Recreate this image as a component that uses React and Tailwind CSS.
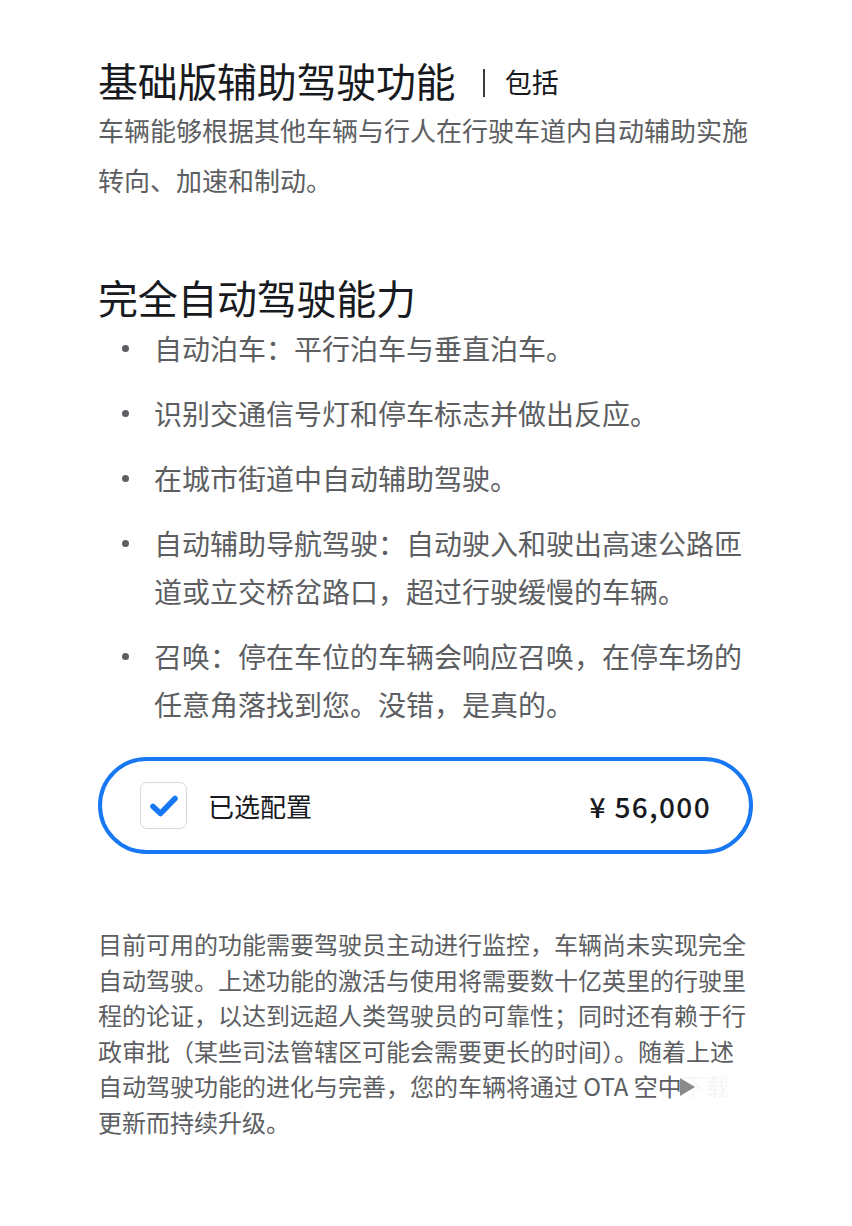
import React from 'react';

const features = [
  ['自动泊车：平行泊车与垂直泊车。'],
  ['识别交通信号灯和停车标志并做出反应。'],
  ['在城市街道中自动辅助驾驶。'],
  ['自动辅助导航驾驶：自动驶入和驶出高速公路匝道或立交桥岔路口，超过行驶缓慢的车辆。'],
  ['召唤：停在车位的车辆会响应召唤，在停车场的任意角落找到您。没错，是真的。'],
];

const font = { fontFamily: '"Noto Sans CJK SC", "Noto Sans", sans-serif' };

export default function App() {
  return (
    <div className="min-h-[1226px] bg-white text-[#171a20]" style={font}>
      <div className="w-[656px] ml-[98px] pt-[56px]">
        {/* 基础版 */}
        <div className="flex items-center h-[48px]">
          <h2 className="text-[40px] leading-[48px] font-normal tracking-[-0.3px]">基础版辅助驾驶功能</h2>
          <span className="w-[1.5px] h-[28px] bg-[#393c41] ml-[28px] mt-[6px]" />
          <span className="text-[27px] ml-[20px] mt-[4px]">包括</span>
        </div>
        <p className="text-[26px] leading-[50px] text-[#5c5e62] mt-px">
          车辆能够根据其他车辆与行人在行驶车道内自动辅助实施转向、加速和制动。
        </p>

        {/* 完全自动驾驶能力 */}
        <h2 className="text-[40px] leading-[48px] font-normal tracking-[-0.3px] mt-[68px]">完全自动驾驶能力</h2>
        <ul className="mt-[3px] flex flex-col gap-[17px]">
          {features.map(([text]) => (
            <li key={text} className="flex text-[28px] leading-[48px] text-[#5c5e62]">
              <span className="w-[56px] shrink-0 flex justify-start pl-[24px] pt-[21px]">
                <span className="w-[7px] h-[7px] rounded-full bg-[#5c5e62]" />
              </span>
              <span className="w-[594px]">{text}</span>
            </li>
          ))}
        </ul>

        {/* 已选配置 */}
        <div className="mt-[29px] w-[655px] h-[97px] rounded-full border-[4px] border-[#1877f2] flex items-center pl-[38px] pr-[38px]">
          <div className="w-[47px] h-[47px] rounded-[7px] border-[1.5px] border-[#d9d9d9] flex items-center justify-center">
            <svg width="30" height="24" viewBox="0 0 30 24" fill="none">
              <path d="M4 12.5 L11.5 19.5 L26 4.5" stroke="#1877f2" strokeWidth="5.5" strokeLinecap="round" strokeLinejoin="round" />
            </svg>
          </div>
          <span className="ml-[21px] text-[26px] text-[#171a20]">已选配置</span>
          <span className="ml-auto text-[28px] font-medium tracking-[1.4px] text-[#171a20]">¥ 56,000</span>
        </div>

        {/* 说明 */}
        <div className="mt-[72px] text-[24px] leading-[35.5px] text-[#5c5e62]">
          <div>目前可用的功能需要驾驶员主动进行监控，车辆尚未实现完全</div>
          <div>自动驾驶。上述功能的激活与使用将需要数十亿英里的行驶里</div>
          <div>程的论证，以达到远超人类驾驶员的可靠性；同时还有赖于行</div>
          <div>政审批（某些司法管辖区可能会需要更长的时间）。随着上述</div>
          <div className="relative">
            自动驾驶功能的进化与完善，您的车辆将通过 OTA 空中<span className="text-[#f6f6f6]">下载</span>
            <svg className="absolute left-[581px] top-[9px]" width="17" height="20" viewBox="0 0 17 20">
              <path d="M1 1 L16 10 L1 19 Z" fill="#8a8a8a" />
            </svg>
          </div>
          <div>更新而持续升级。</div>
        </div>
      </div>
    </div>
  );
}
